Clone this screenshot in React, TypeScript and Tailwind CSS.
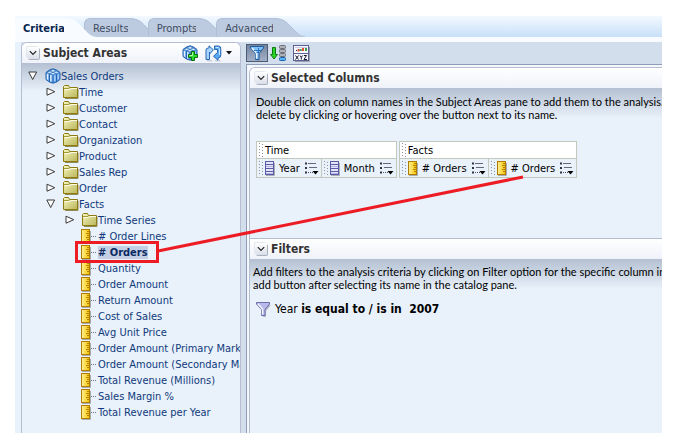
import React from "react";

const FONT = "font-['DejaVu_Sans_Condensed','DejaVu_Sans',sans-serif]";

function FolderIcon() {
  return (
    <svg width="16" height="14" viewBox="0 0 16 14" className="shrink-0">
      <defs>
        <linearGradient id="folder" x1="0" y1="0" x2="1" y2="1">
          <stop offset="0" stopColor="#f7f6c0" />
          <stop offset="1" stopColor="#b9b558" />
        </linearGradient>
      </defs>
      <path d="M2 13.500h13V4" fill="none" stroke="#8f8a5a" />
      <path d="M.5 12.500v-11l1-1h4l1 2h8v10z" fill="url(#folder)" stroke="#8c7a12" />
      <path d="M1.500 4.500h5l1-1h6.500" fill="none" stroke="#fdfce0" />
      <path d="M1 3.500h5l1-1" fill="none" stroke="#a39a35" />
    </svg>
  );
}

function RulerIcon() {
  return (
    <svg width="10" height="15" viewBox="0 0 10 15" className="shrink-0">
      <defs>
        <linearGradient id="ruler" x1="0" y1="0" x2="1" y2="0">
          <stop offset="0" stopColor="#fff09a" />
          <stop offset="1" stopColor="#f7c400" />
        </linearGradient>
      </defs>
      <path d="M1 14.500h8.500V2" fill="none" stroke="#a9abb0" />
      <rect x=".5" y=".5" width="8" height="13" fill="url(#ruler)" stroke="#b07c00" />
      <path d="M6 2.500h2M5 4.500h3M6 6.500h2M5 8.500h3M6 10.500h2" stroke="#b58500" />
    </svg>
  );
}

function CubePaths() {
  return (
    <>
      <path d="M1 4.500 4.500 2 8 .8 11.500 2 15 4.500v7L11.500 14 8 15.200 4.500 14 1 11.500z" fill="#6fa9ec" stroke="#1f5da8" />
      <path d="M1.500 4.500 8 1.300l6.500 3.200L8 7z" fill="#cfe6ff" stroke="#2f72bd" strokeWidth=".8" />
      <path d="M4.700 3 11.300 5.700M11.300 3 4.700 5.700" stroke="#2f72bd" strokeWidth=".8" />
      <path d="M2.500 6v5.500M5.800 7v6.500" stroke="#e2f1ff" strokeWidth="1.300" />
      <path d="M4.500 6v8M8 7v8M11.500 6v8" stroke="#2464b0" />
      <path d="M9.800 7.500v5.500M13.200 6.500v4.500" stroke="#a9d0fb" strokeWidth="1.200" />
    </>
  );
}

function CubeIcon() {
  return (
    <svg width="16" height="16" viewBox="0 0 16 16" className="shrink-0">
      <CubePaths />
    </svg>
  );
}

function AddCubeIcon() {
  return (
    <svg width="17" height="17" viewBox="0 0 17 17">
      <CubePaths />
      <path d="M9.500 6.500h3v3h3v3h-3v3h-3v-3h-3v-3h3z" fill="#2ddc2d" stroke="#087008" />
      <path d="M10.500 7.500v3h-3" fill="none" stroke="#b0ffae" />
    </svg>
  );
}

function RefreshIcon() {
  return (
    <svg width="17" height="17" viewBox="0 0 17 17">
      <path d="M2 15.800h5M10 15.800h5.500" stroke="#b9bec8" />
      <path
        d="M1 14.500V5Q1 3 3.500 3H4V.800l4.300 4L4.500 9.200V7v7.500z"
        fill="#a9d2fc"
        stroke="#2568b4"
        strokeLinejoin="round"
      />
      <path
        d="M9.500 1h4Q15.800 1 15.800 4v6Q15.800 13 13 13v2.200L8.500 11.300l4-4V4.500h-3z"
        fill="#5aa6f0"
        stroke="#2568b4"
        strokeLinejoin="round"
      />
      <path d="M10.500 2.500h3l1 1.500v6" fill="none" stroke="#c8e4ff" />
    </svg>
  );
}

function FunnelIcon({ blue = false }: { blue?: boolean }) {
  return (
    <svg width="15" height="15" viewBox="0 0 15 15" className="shrink-0">
      <path d="M2 2.500 7 9v6h3V9l5-6" fill="#8f939c" opacity=".6" />
      <path
        d="M.5.500h13v1.500L9 7.500v6H5.500v-6L.5 2z"
        fill={blue ? "#7fc0f8" : "#b9b9ee"}
        stroke={blue ? "#1e5c9f" : "#6c6ca8"}
      />
      <path d="M2 2l4.500 5v5.500" fill="none" stroke="#f0f7ff" strokeWidth="1.500" />
      {blue && <path d="M4 4.500h7M6.500 6.500h3M8.500 2v5" stroke="#2b73bd" />}
    </svg>
  );
}

function SortIcon() {
  return (
    <svg width="17" height="16" viewBox="0 0 17 16">
      <path d="M2.500 2.500h3v7h2L4 14 .6 9.500h1.900z" fill="#27d427" stroke="#0c7a0c" />
      {[0.5, 4.5, 8.5].map((y) => (
        <rect key={y} x="9.500" y={y} width="6" height="3" rx="1" fill="#aeb1b8" stroke="#6c7078" />
      ))}
      <rect x="9.500" y="12.500" width="6" height="3" rx="1" fill="#58b2f4" stroke="#1760a8" />
    </svg>
  );
}

function PreviewIcon() {
  return (
    <svg width="17" height="17" viewBox="0 0 17 17">
      <path d="M2 16.500h14.500V2" fill="none" stroke="#9a9eab" />
      <rect x=".5" y=".5" width="15" height="15" fill="#f6f7ff" stroke="#5b5f92" />
      <path d="M2 2.500h12" stroke="#c9cce8" />
      <path d="M3 5.500h1M7.500 5.500h1" stroke="#303060" />
      <path d="M5.500 4v2.500M10 3v3" stroke="#e3502f" strokeWidth="2" />
      <path d="M7.500 4v2M13 3v3" stroke="#3a9c4e" strokeWidth="2" />
      <path d="M1 8.500h14" stroke="#5b5f92" />
      <path
        d="M2.500 10.500l3 4M5.500 10.500l-3 4M7 10.500l1.300 2 1.300-2M8.300 12.500v2M11 10.500h2.500l-2.500 4h3"
        fill="none"
        stroke="#15152d"
      />
    </svg>
  );
}

function ColumnIcon() {
  return (
    <svg width="10" height="15" viewBox="0 0 10 15" className="shrink-0">
      <path d="M1 14.500h8.500V2" fill="none" stroke="#a9abb8" />
      <rect x=".5" y=".5" width="8" height="13" fill="#e4e4fb" stroke="#5c5ca4" />
      <path d="M1 3.500h7M1 7.500h7M1 10.500h7" stroke="#5c5ca4" />
      <path d="M1 5.500h7M1 12.500h7" stroke="#b3b3e6" />
    </svg>
  );
}

function MenuIcon() {
  return (
    <svg width="14" height="13" viewBox="0 0 14 13">
      <path d="M0 1.500h2M0 6h2M0 10.500h2" stroke="#333348" strokeWidth="2" />
      <path d="M3 1.500h8M4 5.500h8" stroke="#66667c" />
      <path d="M3 10.500h5" stroke="#54546c" strokeDasharray="1 1" />
      <path d="M7.500 9h6l-3 3.500z" fill="#000" />
    </svg>
  );
}

function Disclosure({ open, label }: { open: boolean; label: string }) {
  return (
    <button aria-label={label} aria-expanded={open} className="flex w-[17px] shrink-0 items-center">
      <svg width="10" height="10" viewBox="0 0 10 10">
        {open ? (
          <path d="M.8 1h7.800L4.700 8.500z" fill="#fff" stroke="#3b3b3b" />
        ) : (
          <path d="M1 1.200v7L8.800 4.700z" fill="#fff" stroke="#3b3b3b" />
        )}
      </svg>
    </button>
  );
}

function CollapseButton({ label }: { label: string }) {
  return (
    <button
      aria-label={label}
      className="flex size-3 shrink-0 items-center justify-center rounded-xs bg-linear-to-b from-white to-[#d9dee8] shadow-[1px_1px_0_0_#a9b1bf,-1px_-1px_0_0_#e3e7ee]"
    >
      <svg width="8" height="6" viewBox="0 0 8 6">
        <path d="M.8 1.200 4 4.400l3.200-3.200" fill="none" stroke="#222" strokeWidth="1.200" />
      </svg>
    </button>
  );
}

function Tab({ label, active = false }: { label: string; active?: boolean }) {
  return (
    <button
      role="tab"
      aria-selected={active}
      className={
        active
          ? "relative z-10 flex h-full items-stretch font-bold text-[#06264f]"
          : "-ml-3 flex h-full items-stretch text-[#3f4c63]"
      }
    >
      <span
        className={
          active
            ? "flex items-center bg-[#f8fbff] pt-0.5 pl-2"
            : "flex items-center rounded-tl-md border-t border-l border-[#b0bfd6] bg-[#bccbdf] pl-2"
        }
      >
        {label}
      </span>
      <svg width="32" height="19" viewBox="0 0 32 19" className="-ml-px">
        <path d="M0 0C12 0 14 5 20 11S27 18 32 19H0z" fill={active ? "#f8fbff" : "#bccbdf"} />
        {!active && <path d="M0 .5C12 .5 14 5 20 11S27 18 32 19" fill="none" stroke="#b0bfd6" />}
      </svg>
    </button>
  );
}

function PanelHeader({ title, children }: { title: string; children?: React.ReactNode }) {
  return (
    <div className="flex h-5 shrink-0 items-center gap-1 bg-linear-to-b from-white to-[#eff2fa] pr-2 pl-[5px]">
      <CollapseButton label={`Collapse ${title}`} />
      <h2 className="grow text-xs font-bold text-[#333]">{title}</h2>
      {children}
    </div>
  );
}

function FolderRow({ name, open = false }: { name: string; open?: boolean }) {
  return (
    <div className="flex h-4 items-center">
      <Disclosure open={open} label={name} />
      <FolderIcon />
      <span>{name}</span>
    </div>
  );
}

function MeasureRow({ name, selected = false }: { name: string; selected?: boolean }) {
  return (
    <li className="flex h-4 items-center">
      <RulerIcon />
      <span className="mr-0.5 w-[5px] shrink-0 border-t border-dotted border-[#777]" />
      <span className={selected ? "bg-[#c3cfe4] font-bold text-[#0b2a63]" : "whitespace-nowrap"}>{name}</span>
    </li>
  );
}

const folders = ["Time", "Customer", "Contact", "Organization", "Product", "Sales Rep", "Order"];
const measures = [
  "# Order Lines",
  "# Orders",
  "Quantity",
  "Order Amount",
  "Return Amount",
  "Cost of Sales",
  "Avg Unit Price",
  "Order Amount (Primary Market)",
  "Order Amount (Secondary Market)",
  "Total Revenue (Millions)",
  "Sales Margin %",
  "Total Revenue per Year",
];

function SubjectAreas() {
  return (
    <aside className="flex w-[220px] shrink-0 flex-col overflow-hidden rounded-t-md border border-b-0 border-[#b5bdd0] bg-[#e9f1fa]">
      <PanelHeader title="Subject Areas">
        <button aria-label="Add subject area">
          <AddCubeIcon />
        </button>
        <button aria-label="Refresh" className="ml-0.5 flex items-center gap-1">
          <RefreshIcon />
          <svg width="6" height="4" viewBox="0 0 6 4">
            <path d="M0 0h6L3 3.500z" fill="#111" />
          </svg>
        </button>
      </PanelHeader>
      <div className="grow bg-linear-to-b from-[#b4c0d2] to-[#e9f1fa] to-[28px] pt-[5px] pl-1.5 text-[#0f3a7d]">
        <div className="flex h-4 items-center">
          <Disclosure open label="Sales Orders" />
          <CubeIcon />
          <span>Sales Orders</span>
        </div>
        <ul className="pl-[18px]">
          {folders.map((name) => (
            <li key={name}>
              <FolderRow name={name} />
            </li>
          ))}
          <li>
            <FolderRow name="Facts" open />
            <ul className="pl-[19px]">
              <li>
                <FolderRow name="Time Series" />
              </li>
              <li>
                <ul className="pl-4">
                  {measures.map((name) => (
                    <MeasureRow key={name} name={name} selected={name === "# Orders"} />
                  ))}
                </ul>
              </li>
            </ul>
          </li>
        </ul>
      </div>
    </aside>
  );
}

function Grip() {
  return (
    <svg width="4" height="14" viewBox="0 0 4 14" className="shrink-0">
      <path d="M.5 0v14M3.500 1v13" stroke="#8f949c" strokeDasharray="1 2" />
    </svg>
  );
}

function ColumnGroup({ title, columns, measure = false }: { title: string; columns: string[]; measure?: boolean }) {
  return (
    <section className="border border-[#c3c8bd]">
      <h3 className="flex h-4 items-center gap-0.5 bg-white pl-0.5">
        <Grip />
        {title}
      </h3>
      <ul className="flex divide-x divide-[#c3c8bd] border-t border-[#c3c8bd]">
        {columns.map((name, i) => (
          <li key={i} className="flex h-[18px] items-center pr-0.5 pl-0.5">
            <Grip />
            <span className="mr-1 ml-0.5">{measure ? <RulerIcon /> : <ColumnIcon />}</span>
            <span>{name}</span>
            <button aria-label={`${name} options`} className="ml-[5px]">
              <MenuIcon />
            </button>
          </li>
        ))}
      </ul>
    </section>
  );
}

function Toolbar() {
  return (
    <div className="flex h-[22px] shrink-0 items-center gap-2">
      <button
        aria-label="Show filters pane"
        aria-pressed="true"
        className="flex h-[18px] w-[22px] items-center justify-center border border-[#4d5b73] bg-linear-to-b from-[#75849f] to-[#a3b1c8]"
      >
        <FunnelIcon blue />
      </button>
      <button aria-label="Sort columns" className="-ml-1.5">
        <SortIcon />
      </button>
      <button aria-label="Preview results" className="-ml-0.5">
        <PreviewIcon />
      </button>
    </div>
  );
}

const bodyFade = "bg-linear-to-b from-[#b4c0d2] to-[#e9f1fa] to-[30px]";
const hint = "font-['Lato','Liberation_Sans',sans-serif] whitespace-nowrap";

export default function App() {
  return (
    <div className={`${FONT} h-screen bg-white pt-4 pr-9 pb-[9px] pl-[15px] text-[11px] leading-[13px] text-black`}>
      <div className="relative flex h-full flex-col overflow-hidden bg-[#d3deec]">
        <nav role="tablist" className="flex h-[21px] shrink-0 bg-linear-to-b from-[#f3f9ff] to-[#c9e0f8] pt-0.5">
          <Tab label="Criteria" active />
          <Tab label="Results" />
          <Tab label="Prompts" />
          <Tab label="Advanced" />
        </nav>
        <div className="h-[5px] shrink-0 bg-[#f8fbff]" />
        <div className="flex min-h-0 grow">
          <div className="w-1.5 shrink-0 bg-[#e8f2fd]" />
          <SubjectAreas />
          <main className="ml-[5px] flex min-w-0 grow flex-col">
            <Toolbar />
            <div className="flex min-h-0 grow flex-col border-t border-l border-[#8f9db8] bg-[#f4f7fb] pt-0.5 pl-0.5">
              <div className="flex min-h-0 grow flex-col overflow-hidden rounded-tl-md border-t border-l border-[#b5bdd0] bg-[#e9f1fa]">
                <PanelHeader title="Selected Columns" />
                <div className={`${bodyFade} h-[150px] shrink-0 pt-[7px] pl-1.5`}>
                  <p className={hint}>
                    Double click on column names in the Subject Areas pane to add them to the analysis.
                    <br />
                    delete by clicking or hovering over the button next to its name.
                  </p>
                  <div className="mt-5 flex gap-0.5">
                    <ColumnGroup title="Time" columns={["Year", "Month"]} />
                    <ColumnGroup title="Facts" columns={["# Orders", "# Orders"]} measure />
                  </div>
                </div>
                <div className="border-t border-[#b5bdd0]">
                  <PanelHeader title="Filters" />
                </div>
                <div className={`${bodyFade} grow pt-1.5 pl-[3px]`}>
                  <p className={hint}>
                    Add filters to the analysis criteria by clicking on Filter option for the specific column in the
                    <br />
                    add button after selecting its name in the catalog pane.
                  </p>
                  <p className="mt-2.5 flex items-center gap-1 pl-[3px] text-xs">
                    <FunnelIcon />
                    <span className="whitespace-pre">
                      Year <b>{"is equal to / is in  2007"}</b>
                    </span>
                  </p>
                </div>
              </div>
            </div>
          </main>
        </div>
        <svg
          width="520"
          height="260"
          viewBox="0 0 520 260"
          className="pointer-events-none absolute top-0 left-0"
          fill="none"
          stroke="#ed1c24"
          strokeWidth="3"
        >
          <rect x="61.500" y="226.500" width="81" height="19" />
          <path d="M143 235 508 161" />
        </svg>
      </div>
    </div>
  );
}
